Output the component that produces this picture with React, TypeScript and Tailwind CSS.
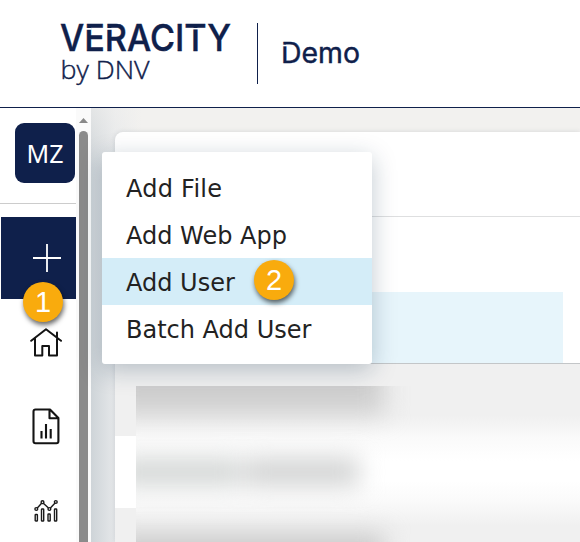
import React from "react";

const menuItems = ["Add File", "Add Web App", "Add User", "Batch Add User"];

function Logo() {
  return (
    <svg width="330" height="90" viewBox="50 10 330 90" className="block" aria-label="Veracity by DNV">
      <g fill="#0f204b">
        <text x="60" y="50.7" fontSize="36.5" fontWeight="500" stroke="#0f204b" strokeWidth="0.4" textLength="171" lengthAdjust="spacingAndGlyphs" className="font-['Inter',sans-serif]">VERACITY</text>
        <text x="60.5" y="78.5" fontSize="25.5" fontWeight="300" stroke="#0f204b" strokeWidth="0.4" textLength="89" lengthAdjust="spacingAndGlyphs" className="font-['Open_Sans',sans-serif]">by DNV</text>
        <text x="281" y="62.8" fontSize="28.5" fontWeight="400" stroke="#0f204b" strokeWidth="0.4" textLength="79" lengthAdjust="spacingAndGlyphs" className="font-['Inter',sans-serif]">Demo</text>
      </g>
      <g fill="#ffffff">
        <rect x="86" y="28" width="5.7" height="1.8" />
        <rect x="106" y="28" width="6.2" height="1.8" />
        <rect x="190" y="28" width="16" height="1.4" />
        <rect x="281" y="44.7" width="6" height="1.6" />
      </g>
      <rect x="257" y="23" width="1" height="61" fill="#0f204b" />
    </svg>
  );
}

function HomeIcon() {
  return (
    <svg width="34" height="30" viewBox="0 0 34 30" fill="none" stroke="#141414" strokeWidth="2" strokeLinejoin="round" strokeLinecap="round">
      <path d="M2.2 12.8 17 1.2 32 12.8M6 10.5V27.4H13.3V18H20V27.4H28V4.5" />
    </svg>
  );
}

function ReportIcon() {
  return (
    <svg width="28" height="37" viewBox="0 0 28 37" fill="none" stroke="#141414" strokeWidth="2.1" strokeLinejoin="round" strokeLinecap="butt">
      <path d="M3.5 1.5H18L26.4 10V33.2Q26.4 35.2 24.4 35.2H3.5Q1.5 35.2 1.5 33.2V3.5Q1.5 1.5 3.5 1.5ZM17.5 1.8V10.2H26M9.5 23V30.5M14 16V30.5M18.7 21V30.5" />
    </svg>
  );
}

function TrendIcon() {
  return (
    <svg width="25" height="24" viewBox="0 0 25 24" fill="none" stroke="#1a1a1a" strokeWidth="1.4">
      <path d="M3.3 9 7.6 4.2M9.3 4.2 14.5 9M16.4 9 21.3 3.7" />
      <circle cx="2.3" cy="10" r="1.4" /><circle cx="8.5" cy="3.2" r="1.4" />
      <circle cx="15.4" cy="10" r="1.4" /><circle cx="21.8" cy="3" r="1.4" />
      <rect x="1.2" y="15.5" width="2.2" height="6.5" rx=".6" /><rect x="7.5" y="10" width="2.2" height="12" rx=".6" />
      <rect x="14" y="15" width="2.2" height="7" rx=".6" /><rect x="20.5" y="10" width="2.2" height="12" rx=".6" />
    </svg>
  );
}

function Badge({ n }: { n: number }) {
  return (
    <span className="flex size-10 items-center justify-center rounded-full bg-[#f9ab0d] pt-px font-['Liberation_Sans',sans-serif] text-[29px] leading-none text-white shadow-[1px_3px_5px_rgba(0,0,0,0.6)]">
      {n}
    </span>
  );
}

export default function App() {
  return (
    <div className="relative flex h-[542px] w-[580px] flex-col overflow-hidden bg-white font-['DejaVu_Sans',sans-serif]">
      <header className="h-[108px] shrink-0 border-b border-[#0f204b] bg-white pt-[10px] pl-[50px]">
        <Logo />
      </header>
      <div className="flex min-h-0 flex-1">
        <aside className="w-[76px] shrink-0 bg-white">
          <div className="h-24 border-b border-[#ccc] pt-[15px] pl-[15px]">
            <div className="flex size-[60px] items-center justify-center rounded-[9px] bg-[#0f204b] pt-0.5 font-['Noto_Sans',sans-serif] text-[25px] text-white">MZ</div>
          </div>
          <div className="mt-[13px] ml-px flex h-[82px] bg-[#0f204b] pt-[27px] pl-8">
            <svg width="28" height="28" stroke="#fff" strokeWidth="1.8"><path d="M0 14H28M14 0V28" /></svg>
          </div>
          <div className="mt-[29px] pl-[29px]"><HomeIcon /></div>
          <div className="mt-[50px] pl-8"><ReportIcon /></div>
          <div className="mt-[54px] pl-[34px]"><TrendIcon /></div>
        </aside>
        <div className="flex w-[15px] shrink-0 flex-col items-center bg-[#fafafa] pt-[10px]">
          <svg width="9" height="5" fill="#888"><path d="M0 5 4.5 0 9 5Z" /></svg>
          <div className="mt-2 w-[9px] flex-1 rounded-t-full bg-[#8b8b8b]" />
        </div>
        <main className="flex min-w-0 flex-1 bg-[linear-gradient(to_bottom,rgba(242,241,239,0.6),rgba(242,241,239,0)_60px),linear-gradient(to_right,#ced4d8,#e6e8ea_24px,#f2f1ef_50px)] pt-6 pl-6">
          <section className="flex flex-1 flex-col overflow-hidden rounded-tl-lg bg-white shadow-[0_0_5px_rgba(40,60,80,0.14)]">
            <div className="h-[85px] shrink-0 border-b border-[#dedfe0]" />
            <div className="h-[147px] shrink-0 border-b border-[#c3c6c8] pt-[75px]">
              <div className="h-[71px] w-[448px] bg-[#e7f5fb]" />
            </div>
            <div className="flex-1 bg-[linear-gradient(#f0f0f0_72px,#fff_72px,#fff_144px,#f0f0f0_144px)] pt-[22px] pl-[21px]">
              <div className="flex h-[156px] flex-col overflow-hidden bg-[linear-gradient(#f0f0f0_30px,#fafafa_52px,#fff_75px,#fff_95px,#fafafa_115px,#f0f0f0_140px)]">
                <div className="-mt-5 -ml-6 flex h-[48px] w-[272px] shrink-0 bg-[#cecece] blur-[12px]" />
                <div className="mt-[44px] -ml-5 flex gap-1 blur-[12px]">
                  <div className="h-[28px] w-[125px] bg-[#d3d6d5]" />
                  <div className="h-[28px] w-[114px] bg-[#d1d2d2]" />
                </div>
                <div className="mt-[48px] -ml-6 h-12 w-[272px] shrink-0 bg-[#cacaca] blur-[12px]" />
              </div>
            </div>
          </section>
        </main>
      </div>
      <nav className="absolute top-[152px] left-[102px] h-[212px] w-[270px] rounded-[3px] bg-white pt-3 shadow-[0_6px_24px_rgba(15,45,75,0.26)]">
        {menuItems.map((item) => (
          <div key={item} className={`flex h-[47px] items-center border-t-2 pl-6 text-[24px] whitespace-nowrap text-[#222] ${item === "Add User" ? "border-[#d4edf8] bg-[#d4edf8]" : "border-transparent"} ${item === "Add File" ? "tracking-[0.25px]" : ""}`}>
            {item}
          </div>
        ))}
      </nav>
      <div className="absolute top-[282px] left-[23px]"><Badge n={1} /></div>
      <div className="absolute top-[260px] left-[254px]"><Badge n={2} /></div>
    </div>
  );
}
